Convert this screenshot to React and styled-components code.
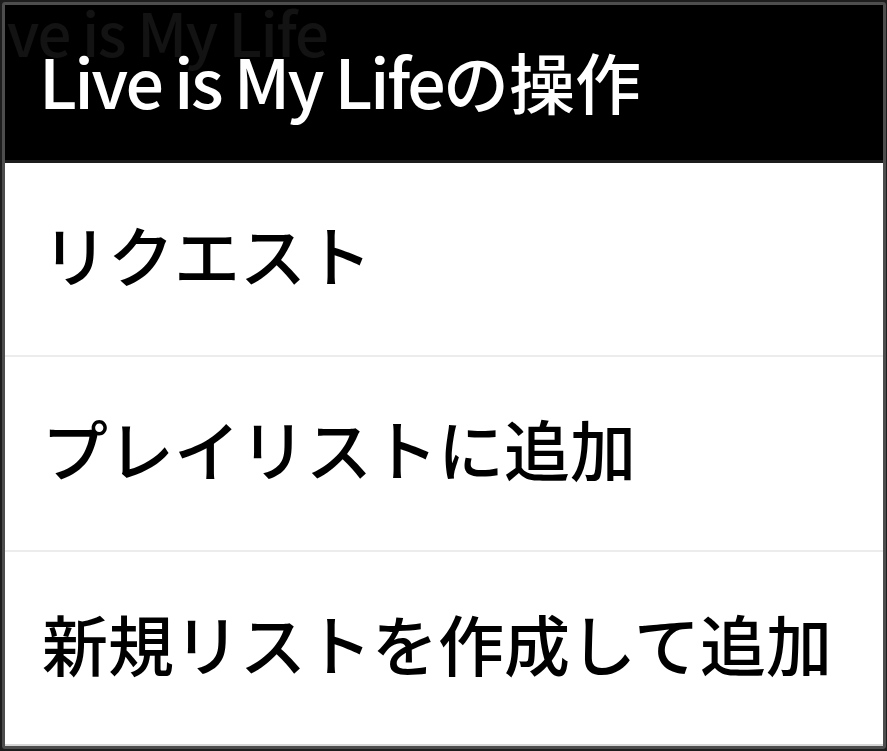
import React from 'react';
import styled, { createGlobalStyle } from 'styled-components';

const GlobalStyle = createGlobalStyle`
  html, body {
    margin: 0;
    padding: 0;
    background: #1d1d1d;
  }
  body {
    font-family: "Noto Sans CJK JP", "Noto Sans", sans-serif;
  }
`;

const Screen = styled.div`
  width: 887px;
  height: 751px;
  padding: 2px 1px 2px 2px;
  box-sizing: border-box;
  overflow: hidden;
`;

const Dialog = styled.div`
  height: 100%;
  box-sizing: border-box;
  border: 3px solid #4d4d4d;
  border-radius: 3px;
  background: #fff;
  display: flex;
  flex-direction: column;
  overflow: hidden;
`;

const Header = styled.div`
  position: relative;
  height: 158px;
  flex: none;
  box-sizing: border-box;
  background: #000;
  border-bottom: 3px solid #1c1c1c;
  display: flex;
  align-items: center;
  padding: 0 0 6px 34px;
  overflow: hidden;
`;

// faint copy of the title from the screen behind the dialog
const Ghost = styled.span`
  position: absolute;
  left: -46px;
  top: -4px;
  font-size: 60px;
  font-weight: 500;
  letter-spacing: -1.5px;
  line-height: 1;
  color: #131313;
  white-space: nowrap;
`;

const Title = styled.h1`
  position: relative;
  margin: 0;
  font-size: 66px;
  font-weight: 500;
  line-height: 1;
  color: #fff;
  white-space: nowrap;
`;

const Latin = styled.span`
  font-size: 68px;
  letter-spacing: -2.6px;
`;

const Menu = styled.ul`
  list-style: none;
  margin: 0;
  padding: 0;
  flex: 1;
  display: flex;
  flex-direction: column;
  border-bottom: 2px solid #d6d6d6;
`;

const Item = styled.li`
  flex: 1;
  display: flex;
  align-items: center;
  padding: 0 0 12px 37px;
  font-size: 66px;
  font-weight: 500;
  line-height: 1;
  color: #000;
  white-space: nowrap;
  & + & {
    border-top: 2px solid #ececec;
  }
`;

const items = ['リクエスト', 'プレイリストに追加', '新規リストを作成して追加'];

export default function App() {
  return (
    <Screen>
      <GlobalStyle />
      <Dialog>
        <Header>
          <Ghost>Live is My Life</Ghost>
          <Title>
            <Latin>Live is My Life</Latin>の操作
          </Title>
        </Header>
        <Menu>
          {items.map((label) => (
            <Item key={label}>{label}</Item>
          ))}
        </Menu>
      </Dialog>
    </Screen>
  );
}
